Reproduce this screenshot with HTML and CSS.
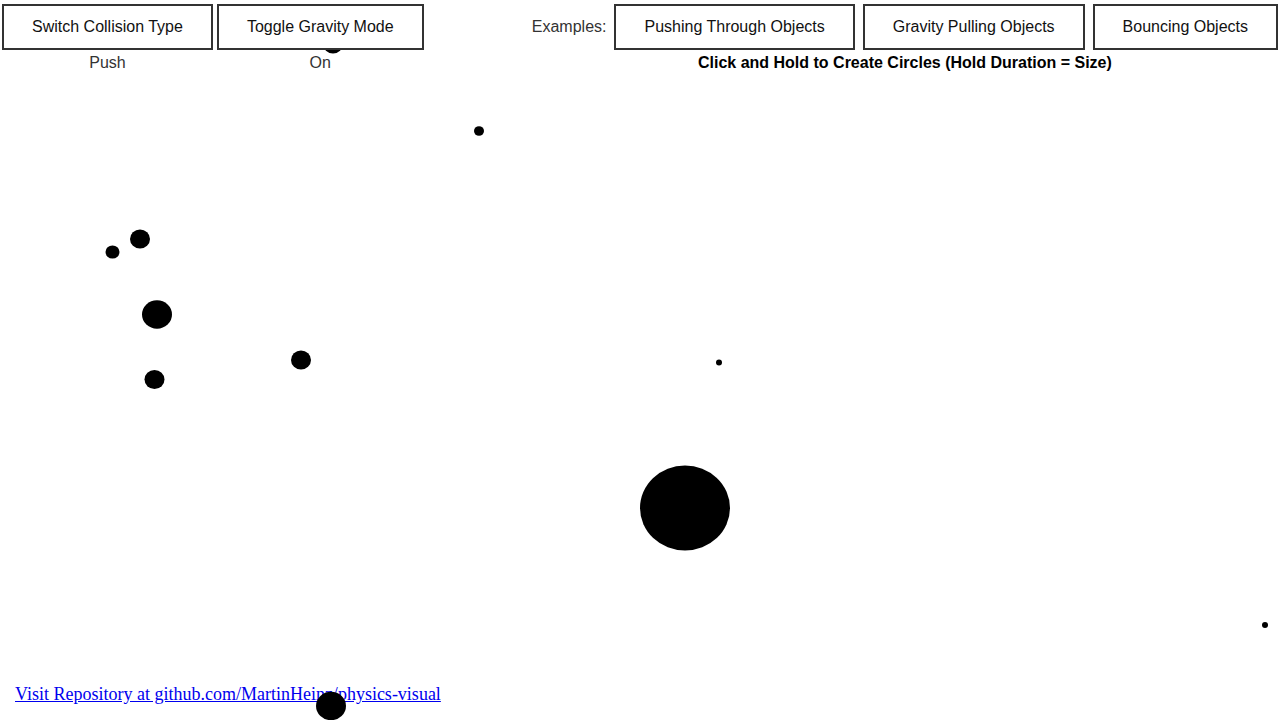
FILE: index.html
```html
<!DOCTYPE html>
<html lang="en">
<head>
    <meta charset="UTF-8">
    <meta name="viewport" content="width=device-width, initial-scale=1.0">
    <title>Physics Visual</title>
    <link rel="stylesheet" href="styles.css">
</head>
<body>
    <a class="repo-link" href="#">Visit Repository at github.com/MartinHeinz/physics-visual</a>

    <svg class="world" viewBox="0 0 1280 720" preserveAspectRatio="none">
        <ellipse cx="333" cy="44" rx="10" ry="9.5"/>
        <ellipse cx="479" cy="131" rx="5" ry="4.8"/>
        <ellipse cx="140" cy="239" rx="10" ry="9.5"/>
        <ellipse cx="112.5" cy="252" rx="7" ry="6.6"/>
        <ellipse cx="157" cy="314.5" rx="15" ry="14.2"/>
        <ellipse cx="154.5" cy="379.5" rx="10" ry="9.5"/>
        <ellipse cx="301" cy="360" rx="10" ry="9.5"/>
        <ellipse cx="719" cy="362.5" rx="3" ry="2.9"/>
        <ellipse cx="685" cy="508" rx="45" ry="42.5"/>
        <ellipse cx="1265" cy="625" rx="3" ry="2.9"/>
        <ellipse cx="331" cy="706" rx="15" ry="14.2"/>
    </svg>

    <div class="controls">
        <div class="toggles">
            <div class="toggle">
                <button>Switch Collision Type</button>
                <span class="state">Push</span>
            </div>
            <div class="toggle">
                <button>Toggle Gravity Mode</button>
                <span class="state">On</span>
            </div>
        </div>

        <div class="examples">
            <div class="example-row">
                <span class="examples-label">Examples:</span>
                <button>Pushing Through Objects</button>
                <button>Gravity Pulling Objects</button>
                <button>Bouncing Objects</button>
            </div>
            <div class="hint">Click and Hold to Create Circles (Hold Duration = Size)</div>
        </div>
    </div>
</body>
</html>
```

FILE: styles.css
```css
html, body {
    margin: 0;
    height: 100%;
    overflow: hidden;
    background-color: #ffffff;
}
body {
    font-family: "Liberation Sans", Arial, sans-serif;
    font-size: 16px;
    color: #222;
}
.world {
    position: absolute;
    left: 0;
    top: 0;
    width: 100%;
    height: 100%;
    z-index: 1;
}
.world ellipse {
    fill: #000;
}
.repo-link {
    position: absolute;
    left: 15px;
    bottom: 15px;
    font-family: "Liberation Serif", "Times New Roman", serif;
    font-size: 18px;
    color: #0000ee;
}
.controls {
    position: relative;
    z-index: 2;
    display: flex;
    justify-content: space-between;
    padding: 4px 2px 0 2px;
}
.toggles {
    display: flex;
    gap: 4px;
}
.toggle {
    display: flex;
    flex-direction: column;
    align-items: center;
}
button {
    background-color: #ffffff;
    border: 2px solid #333;
    height: 46px;
    padding: 0 28px;
    font-family: "Liberation Sans", Arial, sans-serif;
    font-size: 16px;
    color: #111;
    cursor: pointer;
}
.state {
    margin-top: 4px;
    line-height: 18px;
    color: #333;
}
.examples {
    display: flex;
    flex-direction: column;
    align-items: center;
}
.example-row {
    display: flex;
    align-items: center;
    gap: 8px;
}
.examples-label {
    color: #333;
}
.hint {
    margin-top: 4px;
    line-height: 18px;
    font-weight: bold;
    color: #000;
}
```
